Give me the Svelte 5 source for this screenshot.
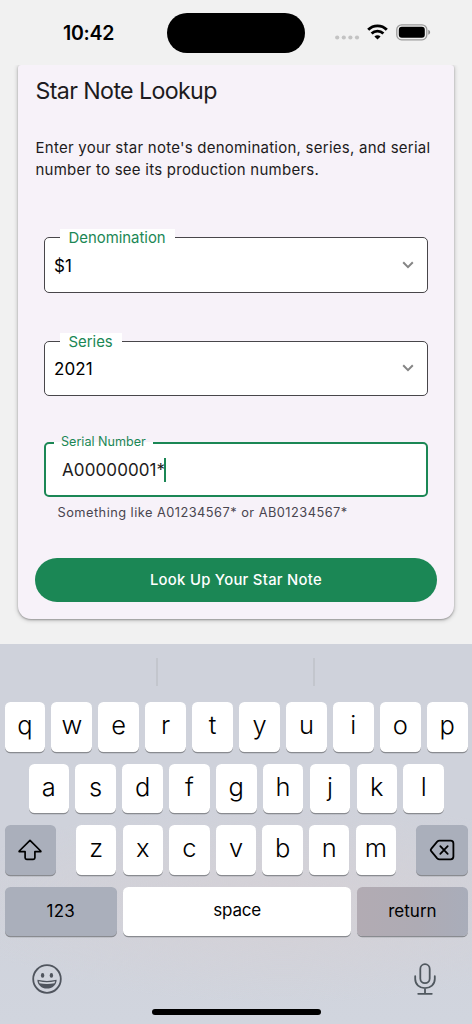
<script>
  const selects = [
    { label: 'Denomination', value: '$1', kind: 'denomination' },
    { label: 'Series', value: '2021', kind: 'series' },
  ];

  const topRow = [...'qwertyuiop'];
  const homeRow = [...'asdfghjkl'];
  const bottomRow = [...'zxcvbnm'];

  let serial = 'A00000001*';
</script>

<div class="screen">
  <header class="status">
    <time>10:42</time>
    <div class="island"></div>
    <div class="indicators">
      <svg class="signal" width="25" height="16" viewBox="0 0 25 16" fill="#c3c3c3">
        <circle cx="2.2" cy="13.5" r="2.1" />
        <circle cx="8.8" cy="13.5" r="2.1" />
        <circle cx="15.4" cy="13.5" r="2.1" />
        <circle cx="22" cy="13.5" r="2.1" />
      </svg>
      <svg class="wifi" width="21" height="16" viewBox="0 0 21 16">
        <path d="M1.2 5.8C6.4.6 14.6.6 19.8 5.8" fill="none" stroke="#000" stroke-width="2.9" />
        <path d="M4.6 9.5C7.9 6.3 13.1 6.3 16.4 9.5" fill="none" stroke="#000" stroke-width="2.8" />
        <path d="M7.4 12.4c1.8-1.6 4.4-1.6 6.2 0l-3.1 3.2z" />
      </svg>
      <svg class="battery" width="35" height="17" viewBox="0 0 35 17">
        <rect x=".8" y=".8" width="30" height="15" rx="4.8" fill="none" stroke="#9b9b9b" stroke-width="1.3" />
        <rect x="2.8" y="2.8" width="26" height="11" rx="3" />
        <path d="M32.3 5.8v5c2.4-.8 2.4-4.2 0-5z" fill="#888" />
      </svg>
    </div>
  </header>

  <main>
    <section class="card">
      <h1>Star Note Lookup</h1>
      <p class="intro">Enter your star note's denomination, series, and serial<br>number to see its production numbers.</p>

      {#each selects as field}
      <div class="field {field.kind}">
        <span class="label">{field.label}</span>
        <span class="value">{field.value}</span>
        <svg class="chevron" width="12" height="8" viewBox="0 0 12 8">
          <path d="M1.2 1.3 6 6.1l4.8-4.8" fill="none" stroke="#858585" stroke-width="2" />
        </svg>
      </div>
      {/each}

      <div class="field serial">
        <span class="label">Serial Number</span>
        <span class="value">{serial}</span><span class="caret"></span>
      </div>
      <p class="hint">Something like A01234567* or AB01234567*</p>

      <button class="submit">Look Up Your Star Note</button>
    </section>
  </main>

  <footer class="keyboard">
    <div class="suggestions">
      <span></span><span></span><span></span>
    </div>
    <div class="row">
      {#each topRow as key}<div class="key">{key}</div>{/each}
    </div>
    <div class="row home">
      {#each homeRow as key}<div class="key">{key}</div>{/each}
    </div>
    <div class="row bottom">
      <div class="key dark side">
        <svg width="26" height="24" viewBox="0 0 26 24" fill="none" stroke="#000" stroke-width="1.7" stroke-linejoin="round">
          <path d="M13 2.3 2.3 13q-.5.7.4.7h5.4v6q0 1.6 1.6 1.6h6.6q1.6 0 1.6-1.6v-6h5.4q.9 0 .4-.7z" />
        </svg>
      </div>
      <div class="letters">
        {#each bottomRow as key}<div class="key">{key}</div>{/each}
      </div>
      <div class="key dark side">
        <svg width="26" height="22" viewBox="0 0 26 22" fill="none" stroke="#000" stroke-width="1.8" stroke-linecap="round" stroke-linejoin="round">
          <path d="M10.5 1.7h11.2q2.7 0 2.7 2.7v13.2q0 2.7-2.7 2.7H10.5q-1.3 0-2.3-1L2.4 12.4q-1.3-1.4 0-2.8l5.8-6.9q1-1 2.3-1z" />
          <path d="m11.3 7.1 7.4 7.8M18.7 7.1l-7.4 7.8" />
        </svg>
      </div>
    </div>
    <div class="row actions">
      <div class="key dark word numbers">123</div>
      <div class="key word space">space</div>
      <div class="key dark word return">return</div>
    </div>
    <div class="tray">
      <svg width="30" height="30" viewBox="0 0 30 30">
        <circle cx="15" cy="15" r="13.8" fill="none" stroke="#50555e" stroke-width="1.8" />
        <ellipse cx="10.6" cy="11.4" rx="1.7" ry="2.3" fill="#50555e" />
        <ellipse cx="19.4" cy="11.4" rx="1.7" ry="2.3" fill="#50555e" />
        <path d="M5.4 15.8q9.6 2.2 19.2 0c.2 5.2-4.3 8.8-9.6 8.8s-9.8-3.6-9.6-8.8z" fill="#50555e" />
        <path d="M6.8 17.3q8.2 1.8 16.4 0l-.7 2q-7.5 1.6-15 0z" fill="#d2d6dd" />
      </svg>
      <svg width="22" height="32" viewBox="0 0 22 32" fill="none" stroke="#50585f" stroke-width="1.8" stroke-linecap="round">
        <rect x="6.3" y="1.2" width="9.4" height="19" rx="4.7" />
        <path d="M1.2 13.2V16c0 5.4 4.3 9.1 9.8 9.1s9.8-3.7 9.8-9.1v-2.8M11 25.1v5.7M4.2 30.8h13.6" />
      </svg>
    </div>
    <div class="home-bar"></div>
  </footer>
</div>

<style>
  :global(body) {
    margin: 0;
  }

  .screen {
    width: 472px;
    height: 1024px;
    display: flex;
    flex-direction: column;
    overflow: hidden;
    background: #f1f1f1;
    color: #1d1b20;
    font-family: Inter, 'Liberation Sans', sans-serif;
    -webkit-font-smoothing: antialiased;
  }

  .screen *, .screen *::before {
    box-sizing: border-box;
  }

  .status {
    flex: none;
    height: 65px;
    display: grid;
    grid-template-columns: 167px 138px 1fr;
    align-items: start;
  }

  time {
    padding: 21px 0 0 63px;
    font-size: 19.5px;
    line-height: 24px;
    font-weight: 600;
    letter-spacing: -0.25px;
    color: #000;
  }

  .island {
    height: 40px;
    margin-top: 12.7px;
    border-radius: 20px;
    background: #000;
  }

  .indicators {
    display: flex;
    padding: 24px 0 0 29.5px;
  }

  .wifi {
    margin-left: 7.5px;
  }

  .battery {
    margin-left: 8px;
  }

  main {
    flex: none;
    height: 578.5px;
    padding: 0 18px;
    overflow: hidden;
  }

  .card {
    height: 554px;
    padding: 0 17.5px;
    border-radius: 3px 3px 13px 13px;
    background: #f7f2f9;
    box-shadow: 0 1px 2px rgba(0, 0, 0, 0.3), 0 1px 4px 1px rgba(0, 0, 0, 0.14);
  }

  h1 {
    margin: 0;
    padding-top: 10px;
    font-size: 23.2px;
    line-height: 32px;
    font-weight: 400;
    letter-spacing: -0.62px;
  }

  .intro {
    margin: 30px 0 0;
    font-size: 15px;
    line-height: 22px;
    letter-spacing: 0.25px;
    white-space: nowrap;
  }

  .field {
    position: relative;
    display: flex;
    align-items: center;
    height: 56px;
    margin: 0 8.5px;
    padding: 0 13px 0 9px;
    border: 1.3px solid #48464a;
    border-radius: 5px;
    background: #fff;
  }

  .denomination {
    margin-top: 56px;
  }

  .series {
    height: 55px;
    margin-top: 47.5px;
  }

  .label {
    position: absolute;
    top: -9px;
    left: 15px;
    height: 18px;
    padding: 0 9px 0 8.5px;
    background: #fff;
    color: #1b8755;
    font-size: 14.9px;
    line-height: 19px;
    white-space: nowrap;
  }

  .series .label {
    line-height: 18px;
  }

  .value {
    padding-top: 1px;
    color: #000;
    font-size: 17px;
    letter-spacing: 0.1px;
  }

  .chevron {
    margin-left: auto;
  }

  .serial {
    height: 55.5px;
    margin-top: 46px;
    padding-left: 16px;
    border: 2.3px solid #1b8755;
  }

  .serial .label {
    top: -10px;
    left: 8px;
    height: 16px;
    padding: 0 7px;
    background: linear-gradient(#f7f2f9 50%, #fff 50%);
    font-size: 12.6px;
    line-height: 16px;
  }

  .serial .value {
    padding-top: 2px;
    color: #1d1b20;
  }

  .caret {
    width: 2px;
    height: 24px;
    margin: 1px 0 0 -1px;
    background: #1b8755;
  }

  .hint {
    margin: 7px 0 0 22px;
    color: #49454f;
    font-size: 12.8px;
    line-height: 18px;
    letter-spacing: 0.47px;
  }

  .submit {
    display: block;
    width: 402px;
    height: 44px;
    margin: 35.5px 0 0 -0.5px;
    padding: 0;
    border: none;
    border-radius: 22px;
    background: #1b8755;
    color: #fff;
    font: inherit;
    font-size: 14.8px;
    font-weight: 450;
    letter-spacing: 0.3px;
  }

  .keyboard {
    flex: 1;
    display: flex;
    flex-direction: column;
    padding: 0 4.5px;
    background:
      radial-gradient(ellipse 340px 100px at 60% 68%, #d5d1d6, transparent),
      linear-gradient(#cfd2db 60%, #d1d5de);
    color: #000;
  }

  .suggestions {
    flex: none;
    height: 58.5px;
    padding-top: 14.5px;
    display: grid;
    grid-template-columns: 151.5px 157px 1fr;
  }

  .suggestions span {
    height: 28px;
  }

  .suggestions span + span {
    border-left: 2px solid #c3c6cd;
  }

  .row {
    flex: none;
    display: flex;
    gap: 6.2px;
    height: 49.5px;
    margin-bottom: 12px;
  }

  .home {
    padding: 0 23.5px 0 24px;
  }

  .key {
    flex: 1 1 0;
    min-width: 0;
    height: 49.5px;
    display: flex;
    align-items: center;
    justify-content: center;
    padding-bottom: 4px;
    border-radius: 5.5px;
    background: #fff;
    box-shadow: 0 1.3px 0 #898b90;
    font-size: 25.5px;
    font-weight: 330;
  }

  .key.dark {
    background: #aaafbb;
  }

  .bottom {
    gap: 20px;
  }

  .letters {
    flex: 1;
    display: flex;
    gap: 6.2px;
  }

  .key.side {
    flex: none;
    width: 51.5px;
    padding: 1px 0 0;
  }

  .actions {
    margin-bottom: 0;
  }

  .key.word {
    flex: none;
    padding: 0;
    font-size: 17px;
    font-weight: 400;
  }

  .key.numbers {
    width: 112.5px;
    letter-spacing: 0.2px;
  }

  .key.space {
    width: 228px;
    padding-bottom: 2px;
    letter-spacing: -0.2px;
  }

  .key.return {
    flex: 1;
    background: linear-gradient(90deg, #b2abb3, #aeabb4 55%, #a9adba);
  }

  .tray {
    display: flex;
    align-items: center;
    justify-content: space-between;
    height: 32px;
    margin-top: 26.5px;
    padding: 0 31.5px 0 27.5px;
  }

  .home-bar {
    width: 169px;
    height: 5.5px;
    margin: 14.5px auto 0;
    border-radius: 3px;
    background: #000;
  }
</style>
